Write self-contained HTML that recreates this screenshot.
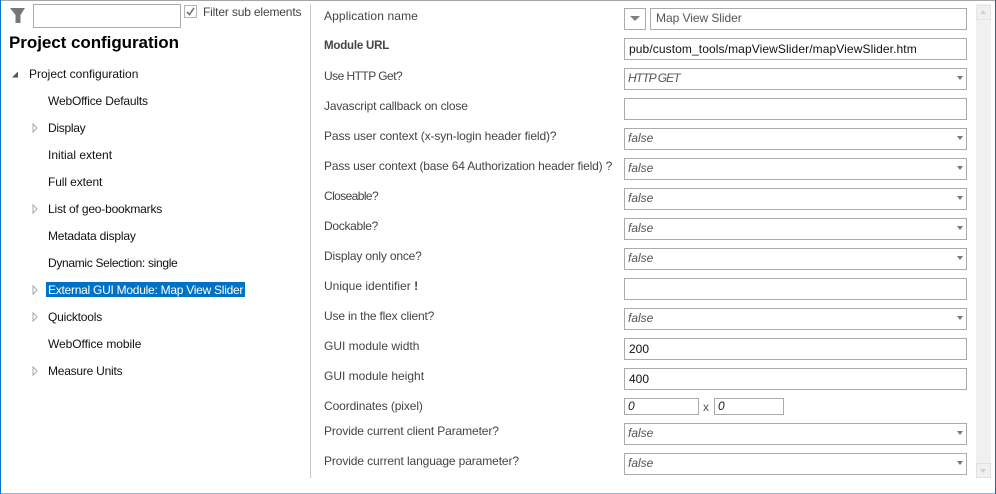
<!DOCTYPE html>
<html><head><meta charset="utf-8">
<style>
html,body{margin:0;padding:0;background:#fff}
#p{position:relative;width:996px;height:494px;overflow:hidden;background:#fff;font-family:"Liberation Sans",sans-serif;font-size:12px;color:#444}
#p div{position:absolute;box-sizing:border-box;white-space:nowrap}
.l{left:324px;height:16px;line-height:16px;color:#444}
.t{left:48px;height:16px;line-height:16px;color:#111}
.b{left:624px;width:343px;height:22px;border:1px solid #ababab;background:#fff;line-height:18px;padding-left:4px;color:#222}
.s{font-style:italic;color:#555;padding-left:3px}
.s:after{content:"";position:absolute;right:3px;top:7px;border-left:3.5px solid transparent;border-right:3.5px solid transparent;border-top:4px solid #777}
svg{position:absolute}
</style></head><body>
<div id="p">
<div style="left:0;top:0;width:996px;height:1px;background:#a6a6a6"></div>
<div style="left:0;top:0;width:1px;height:494px;background:#0a73c8"></div>
<div style="left:995px;top:0;width:1px;height:494px;background:#0a6cb8"></div>
<div style="left:1px;top:493px;width:994px;height:1px;background:#8fbcdc"></div>

<svg style="left:10px;top:8px" width="16" height="16" viewBox="0 0 16 16"><path d="M0 0H15L10.500 7V15H5.500V7Z" fill="#777"/></svg>
<div style="left:33px;top:4px;width:148px;height:24px;border:1px solid #ababab"></div>
<div style="left:184px;top:5px;width:13px;height:13px;border:1px solid #b5b5b5"></div>
<svg style="left:186px;top:7px" width="9" height="9" viewBox="0 0 9 9"><path d="M1 5L3.500 7.500L8 1" fill="none" stroke="#777" stroke-width="1.600"/></svg>
<div style="left:203px;top:4px;height:16px;line-height:16px;color:#444;letter-spacing:-.16px">Filter sub elements</div>
<div style="left:9px;top:33px;height:20px;line-height:20px;font-size:17px;font-weight:bold;color:#000;letter-spacing:-.05px">Project configuration</div>

<svg style="left:11px;top:71px" width="8" height="8"><path d="M7 .5V6.500H1Z" fill="#555"/></svg>
<div class="t" style="left:29px;top:66px">Project configuration</div>
<div class="t" style="top:93px;letter-spacing:-.17px">WebOffice Defaults</div>
<svg style="left:32px;top:123px" width="7" height="10"><path d="M1 .8L5 5L1 9.200Z" fill="#fff" stroke="#a8a8a8"/></svg>
<div class="t" style="top:120px;letter-spacing:-.28px">Display</div>
<div class="t" style="top:147px">Initial extent</div>
<div class="t" style="top:174px;letter-spacing:-.1px">Full extent</div>
<svg style="left:32px;top:204px" width="7" height="10"><path d="M1 .8L5 5L1 9.200Z" fill="#fff" stroke="#a8a8a8"/></svg>
<div class="t" style="top:201px;letter-spacing:-.19px">List of geo-bookmarks</div>
<div class="t" style="top:228px;letter-spacing:-.19px">Metadata display</div>
<div class="t" style="top:255px;letter-spacing:-.32px">Dynamic Selection: single</div>
<svg style="left:32px;top:285px" width="7" height="10"><path d="M1 .8L5 5L1 9.200Z" fill="#fff" stroke="#a8a8a8"/></svg>
<div style="left:46px;top:282px;width:199px;height:15px;background:#0072c6"></div>
<div class="t" style="top:282px;color:#fff;letter-spacing:-.26px">External GUI Module: Map View Slider</div>
<svg style="left:32px;top:312px" width="7" height="10"><path d="M1 .8L5 5L1 9.200Z" fill="#fff" stroke="#a8a8a8"/></svg>
<div class="t" style="top:309px;letter-spacing:-.2px">Quicktools</div>
<div class="t" style="top:336px;letter-spacing:-.06px">WebOffice mobile</div>
<svg style="left:32px;top:366px" width="7" height="10"><path d="M1 .8L5 5L1 9.200Z" fill="#fff" stroke="#a8a8a8"/></svg>
<div class="t" style="top:363px;letter-spacing:-.23px">Measure Units</div>

<div style="left:310px;top:4px;width:1px;height:474px;background:#c8c8c8"></div>

<div class="l" style="top:8px;letter-spacing:.12px">Application name</div>
<div class="l" style="top:38px;font-weight:bold;font-size:11.500px;letter-spacing:-.2px">Module URL</div>
<div class="l" style="top:68px;letter-spacing:-.54px">Use HTTP Get?</div>
<div class="l" style="top:98px;letter-spacing:-.18px">Javascript callback on close</div>
<div class="l" style="top:128px;letter-spacing:-.11px">Pass user context (x-syn-login header field)?</div>
<div class="l" style="top:158px;letter-spacing:-.18px">Pass user context (base 64 Authorization header field) ?</div>
<div class="l" style="top:188px;letter-spacing:-.6px">Closeable?</div>
<div class="l" style="top:218px;letter-spacing:-.3px">Dockable?</div>
<div class="l" style="top:248px;letter-spacing:-.17px">Display only once?</div>
<div class="l" style="top:278px">Unique identifier <b>!</b></div>
<div class="l" style="top:308px;letter-spacing:-.17px">Use in the flex client?</div>
<div class="l" style="top:338px">GUI module width</div>
<div class="l" style="top:368px">GUI module height</div>
<div class="l" style="top:398px;letter-spacing:-.1px">Coordinates (pixel)</div>
<div class="l" style="top:423px;letter-spacing:-.12px">Provide current client Parameter?</div>
<div class="l" style="top:453px;letter-spacing:-.11px">Provide current language parameter?</div>

<div style="left:624px;top:8px;width:22px;height:22px;border:1px solid #ababab"></div>
<div style="left:630px;top:16px;width:0;height:0;border-left:5px solid transparent;border-right:5px solid transparent;border-top:5px solid #808080"></div>
<div class="b" style="left:650px;width:317px;top:8px;color:#555;padding-left:5px;letter-spacing:-.05px">Map View Slider</div>
<div class="b" style="top:38px;color:#111;line-height:20px;letter-spacing:.1px">pub/custom_tools/mapViewSlider/mapViewSlider.htm</div>
<div class="b s" style="top:68px;letter-spacing:-.9px">HTTP GET</div>
<div class="b" style="top:98px"></div>
<div class="b s" style="top:128px">false</div>
<div class="b s" style="top:158px">false</div>
<div class="b s" style="top:188px">false</div>
<div class="b s" style="top:218px">false</div>
<div class="b s" style="top:248px">false</div>
<div class="b" style="top:278px"></div>
<div class="b s" style="top:308px">false</div>
<div class="b" style="top:338px;color:#111;line-height:20px">200</div>
<div class="b" style="top:368px;color:#111;line-height:20px">400</div>
<div class="b" style="top:398px;width:75px;height:17px;line-height:15px;font-style:italic;padding-left:3px;color:#222">0</div>
<div style="left:703px;top:399px;height:16px;line-height:16px;color:#555">x</div>
<div class="b" style="left:714px;top:398px;width:70px;height:17px;line-height:15px;font-style:italic;padding-left:3px;color:#222">0</div>
<div class="b s" style="top:423px">false</div>
<div class="b s" style="top:453px">false</div>

<div style="left:976px;top:4px;width:15px;height:474px;background:#f0f0f0"></div>
<div style="left:976px;top:5px;width:15px;height:15px;background:#f0f0f0;border:1px solid #e6e6e6"></div>
<div style="left:980px;top:10px;width:0;height:0;border-left:3.5px solid transparent;border-right:3.5px solid transparent;border-bottom:4px solid #d0d0d0"></div>
<div style="left:976px;top:463px;width:15px;height:15px;background:#f0f0f0;border:1px solid #e0e0e0"></div>
<div style="left:980px;top:469px;width:0;height:0;border-left:3.5px solid transparent;border-right:3.5px solid transparent;border-top:4px solid #d0d0d0"></div>
</div>
</body></html>
